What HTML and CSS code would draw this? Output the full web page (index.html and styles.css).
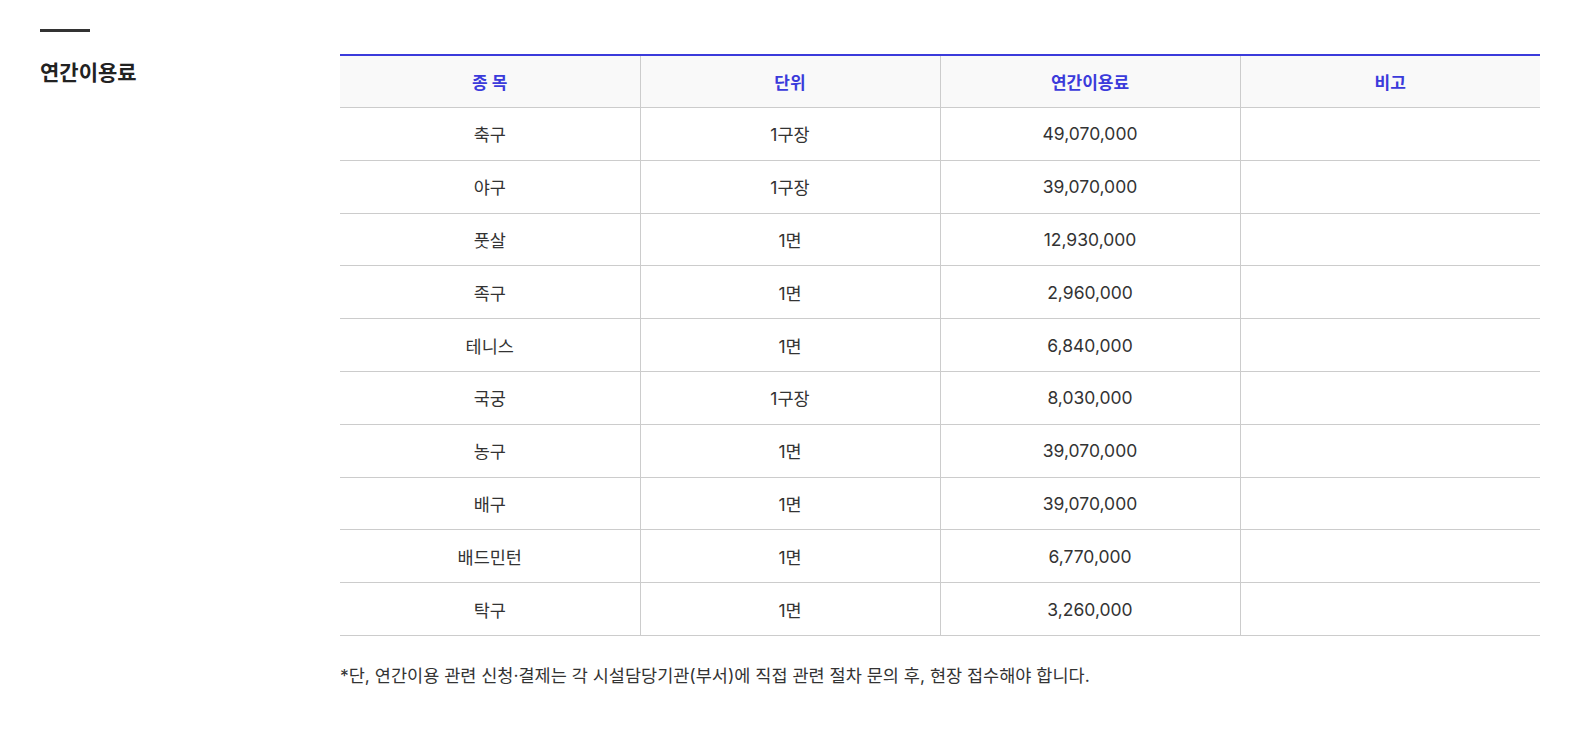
FILE: index.html
```html
<!DOCTYPE html>
<html lang="ko">
<head>
<meta charset="utf-8">
<title>연간이용료</title>
<link rel="stylesheet" href="styles.css">
</head>
<body>
<div class="section">
  <div class="side">
    <div class="bar"></div>
    <h2 class="title">연간이용료</h2>
  </div>
  <div class="content">
    <table class="fee">
      <thead>
        <tr><th>종 목</th><th>단위</th><th>연간이용료</th><th>비고</th></tr>
      </thead>
      <tbody>
        <tr><td>축구</td><td>1구장</td><td>49,070,000</td><td></td></tr>
        <tr><td>야구</td><td>1구장</td><td>39,070,000</td><td></td></tr>
        <tr><td>풋살</td><td>1면</td><td>12,930,000</td><td></td></tr>
        <tr><td>족구</td><td>1면</td><td>2,960,000</td><td></td></tr>
        <tr><td>테니스</td><td>1면</td><td>6,840,000</td><td></td></tr>
        <tr><td>국궁</td><td>1구장</td><td>8,030,000</td><td></td></tr>
        <tr><td>농구</td><td>1면</td><td>39,070,000</td><td></td></tr>
        <tr><td>배구</td><td>1면</td><td>39,070,000</td><td></td></tr>
        <tr><td>배드민턴</td><td>1면</td><td>6,770,000</td><td></td></tr>
        <tr><td>탁구</td><td>1면</td><td>3,260,000</td><td></td></tr>
      </tbody>
    </table>
    <p class="note">*단, 연간이용 관련 신청·결제는 각 시설담당기관(부서)에 직접 관련 절차 문의 후, 현장 접수해야 합니다.</p>
  </div>
</div>
</body>
</html>
```
FILE: styles.css
```css
html, body {
  margin: 0;
  padding: 0;
  background: #fff;
}
body {
  font-family: Inter, "Noto Sans CJK KR", sans-serif;
  color: #333;
}
.section {
  display: flex;
  padding: 29px 0 0 40px;
}
.side {
  width: 300px;
  flex: none;
}
.bar {
  width: 50px;
  height: 3px;
  background: #333;
}
.title {
  margin: 25px 0 0;
  font-size: 21px;
  line-height: 31px;
  font-weight: 700;
  color: #222;
}
.content {
  flex: none;
  width: 1200px;
  padding-top: 25px;
}
.fee {
  width: 1200px;
  border-collapse: collapse;
  table-layout: fixed;
  border-top: 2px solid #3b3bdb;
}
.fee th, .fee td {
  height: 51.8px;
  padding: 0;
  text-align: center;
  font-size: 17.5px;
  border-bottom: 1px solid #ccc;
  border-left: 1px solid #ccc;
}
.fee th:first-child, .fee td:first-child {
  border-left: none;
}
.fee th {
  height: 51px;
  background: #f9f9f9;
  color: #3b3bdb;
  font-weight: 700;
  font-size: 17px;
}
.fee td {
  color: #333;
  font-weight: 400;
}
.note {
  margin: 27px 0 0;
  font-size: 17.5px;
  line-height: 25px;
  color: #333;
}
```
